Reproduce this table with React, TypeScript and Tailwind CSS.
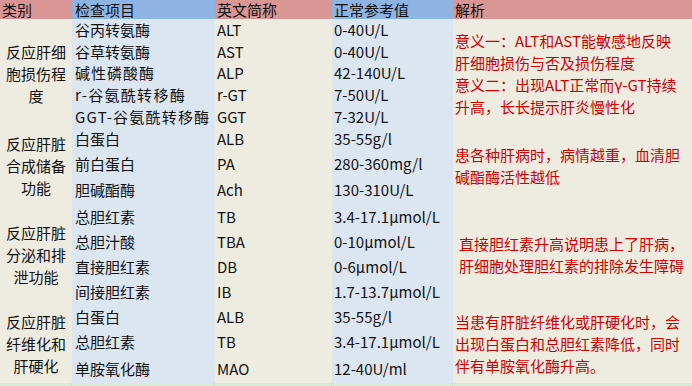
import React from "react";

const cream = "bg-[#eeece1]";
const blue = "bg-[#dce6f1]";

type Row = { item: string; abbr: string; range: string; track?: string };

const groups: { cat: string[]; rows: Row[]; note: string[]; notePad: string }[] = [
  {
    cat: ["反应肝细", "胞损伤程", "度"],
    rows: [
      { item: "谷丙转氨酶", abbr: "ALT", range: "0-40U/L" },
      { item: "谷草转氨酶", abbr: "AST", range: "0-40U/L" },
      { item: "碱性磷酸酶", abbr: "ALP", range: "42-140U/L", track: "tracking-[1px]" },
      { item: "r-谷氨酰转移酶", abbr: "r-GT", range: "7-50U/L", track: "tracking-[1.3px]" },
      { item: "GGT-谷氨酰转移酶", abbr: "GGT", range: "7-32U/L", track: "tracking-[1.2px]" },
    ],
    note: [
      "意义一：ALT和AST能敏感地反映",
      "肝细胞损伤与否及损伤程度",
      "意义二：出现ALT正常而γ-GT持续",
      "升高，长长提示肝炎慢性化",
    ],
    notePad: "pl-[2px]",
  },
  {
    cat: ["反应肝脏", "合成储备", "功能"],
    rows: [
      { item: "白蛋白", abbr: "ALB", range: "35-55g/l" },
      { item: "前白蛋白", abbr: "PA", range: "280-360mg/l" },
      { item: "胆碱酯酶", abbr: "Ach", range: "130-310U/L" },
    ],
    note: ["患各种肝病时，病情越重，血清胆", "碱酯酶活性越低"],
    notePad: "pl-[2px]",
  },
  {
    cat: ["反应肝脏", "分泌和排", "泄功能"],
    rows: [
      { item: "总胆红素", abbr: "TB", range: "3.4-17.1μmol/L" },
      { item: "总胆汁酸", abbr: "TBA", range: "0-10μmol/L" },
      { item: "直接胆红素", abbr: "DB", range: "0-6μmol/L" },
      { item: "间接胆红素", abbr: "IB", range: "1.7-13.7μmol/L" },
    ],
    note: ["直接胆红素升高说明患上了肝病，", "肝细胞处理胆红素的排除发生障碍"],
    notePad: "pl-[6px]",
  },
  {
    cat: ["反应肝脏", "纤维化和", "肝硬化"],
    rows: [
      { item: "白蛋白", abbr: "ALB", range: "35-55g/l" },
      { item: "总胆红素", abbr: "TB", range: "3.4-17.1μmol/L" },
      { item: "单胺氧化酶", abbr: "MAO", range: "12-40U/ml" },
    ],
    note: ["当患有肝脏纤维化或肝硬化时，会", "出现白蛋白和总胆红素降低，同时", "伴有单胺氧化酶升高。"],
    notePad: "pl-[2px]",
  },
];

const heights = [
  ["h-[22px]", "h-[22px]", "h-[21px]", "h-[22px]", "h-[22px]"],
  ["h-[23px]", "h-[26px]", "h-[27px]"],
  ["h-[26px]", "h-[25px]", "h-[25px]", "h-[25px]"],
  ["h-[25px]", "h-[25px]", "h-[28px]"],
];

export default function App() {
  return (
    <div
      className="w-[692px] h-[386px] overflow-hidden bg-[#eeece1] text-[15px] text-[#111]"
      style={{ fontFamily: '"Noto Sans CJK SC", "Noto Sans", sans-serif' }}
    >
      <div className="flex h-[19px] leading-[19px]">
        <div className="w-[72px] bg-[#da9694] pl-[2px]">类别</div>
        <div className="w-[143px] bg-[#8db4e2] pl-[3px]">检查项目</div>
        <div className="w-[117px] bg-[#da9694] pl-[2px]">英文简称</div>
        <div className="w-[121px] bg-[#8db4e2] pl-[2px]">正常参考值</div>
        <div className="w-[239px] bg-[#da9694] pl-[2px]">解析</div>
      </div>
      {groups.map((g, gi) => (
        <div key={gi} className="flex">
          <div className={`w-[72px] ${cream} flex flex-col justify-center items-center leading-[22px]`}>
            {g.cat.map((c, i) => (
              <div key={i} className="whitespace-nowrap">{c}</div>
            ))}
          </div>
          <div className="flex flex-col">
            {g.rows.map((r, ri) => (
              <div key={ri} className={`flex items-center ${heights[gi][ri]}`}>
                <div className={`w-[143px] h-full ${blue} pl-[3px] flex items-center whitespace-nowrap ${r.track ?? ""}`}>{r.item}</div>
                <div className={`w-[117px] h-full ${cream} pl-[2px] flex items-center whitespace-nowrap`}>{r.abbr}</div>
                <div className={`w-[121px] h-full ${blue} pl-[2px] flex items-center whitespace-nowrap`}>{r.range}</div>
              </div>
            ))}
          </div>
          <div className={`w-[239px] ${cream} ${g.notePad} flex flex-col justify-center leading-[22px] text-[#d00000]`}>
            {g.note.map((n, i) => (
              <div key={i} className="whitespace-nowrap">{n}</div>
            ))}
          </div>
        </div>
      ))}
      <div className="flex h-[3px] bg-[#d6ecd6]">
        <div className="w-[72px] border-r border-[#c8dcc8]" />
        <div className="w-[143px] border-r border-[#c8dcc8]" />
        <div className="w-[117px] border-r border-[#c8dcc8]" />
        <div className="w-[121px] border-r border-[#c8dcc8]" />
      </div>
    </div>
  );
}
